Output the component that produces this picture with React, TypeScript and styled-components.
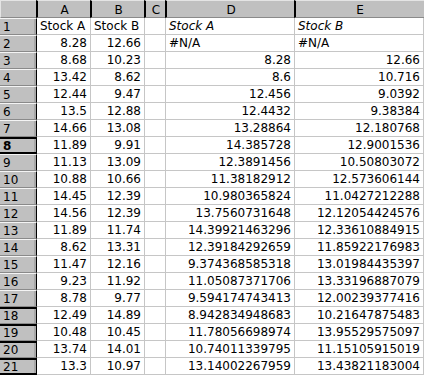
import React from "react";
import styled, { createGlobalStyle, css } from "styled-components";

const Global = createGlobalStyle`
  html, body { margin: 0; padding: 0; background: #ffffff; overflow: hidden; }
  body { font-family: "DejaVu Sans", "Liberation Sans", sans-serif; font-size: 12px; color: #000; }
`;

const Sheet = styled.div`
  display: grid;
  grid-template-columns: 37px 54px 54px 21px 129px 129px;
  grid-template-rows: 18px repeat(21, 17px);
  width: 425px;
  height: 377px;
  overflow: hidden;
  background: #ffffff;
`;

const Corner = styled.div`
  box-sizing: border-box;
  background: #c0c0c0;
  border-top: 1px solid #e4e4e4;
  border-left: 1px solid #e4e4e4;
  border-bottom: 1px solid #8a8a8a;
  border-right: 1px solid #000;
`;

const ColHead = styled.div`
  box-sizing: border-box;
  background: #c0c0c0;
  border-left: 2px solid #000;
  border-top: 1px solid #e4e4e4;
  border-bottom: 1px solid #8a8a8a;
  margin-left: -1px;
  display: flex;
  align-items: center;
  justify-content: center;
  font-size: 12px;
  line-height: 14px;
  padding-top: 1px;
`;

const RowHead = styled.div<{ $top?: boolean; $bottom?: boolean; $bold?: boolean }>`
  box-sizing: border-box;
  background: #c0c0c0;
  border-top: 1px solid #f4f4f4;
  border-bottom: 1px solid #8a8a8a;
  border-right: 1px solid #000;
  box-shadow: inset -2px 0 0 #a8a8a8;
  display: flex;
  align-items: center;
  padding-left: 3px;
  font-size: 12px;
  line-height: 14px;
  ${(p) =>
    p.$top &&
    css`
      border-top: 2px solid #000;
    `}
  ${(p) =>
    p.$bottom &&
    css`
      border-bottom: 2px solid #000;
    `}
  ${(p) =>
    p.$bold &&
    css`
      font-weight: bold;
    `}
`;

const Cell = styled.div<{ $align?: "left" | "right"; $italic?: boolean }>`
  box-sizing: border-box;
  background: #ffffff;
  border-right: 1px solid #c6c6c6;
  border-bottom: 1px solid #c6c6c6;
  display: flex;
  align-items: center;
  justify-content: ${(p) => (p.$align === "right" ? "flex-end" : "flex-start")};
  padding: 0 3px 0 3px;
  font-size: 12px;
  line-height: 14px;
  white-space: nowrap;
  overflow: hidden;
  font-style: ${(p) => (p.$italic ? "italic" : "normal")};
`;

type Row = [string, string, string, string];

const rows: Row[] = [
  ["Stock A", "Stock B", "Stock A", "Stock B"],
  ["8.28", "12.66", "#N/A", "#N/A"],
  ["8.68", "10.23", "8.28", "12.66"],
  ["13.42", "8.62", "8.6", "10.716"],
  ["12.44", "9.47", "12.456", "9.0392"],
  ["13.5", "12.88", "12.4432", "9.38384"],
  ["14.66", "13.08", "13.28864", "12.180768"],
  ["11.89", "9.91", "14.385728", "12.9001536"],
  ["11.13", "13.09", "12.3891456", "10.50803072"],
  ["10.88", "10.66", "11.38182912", "12.573606144"],
  ["14.45", "12.39", "10.980365824", "11.0427212288"],
  ["14.56", "12.39", "13.7560731648", "12.12054424576"],
  ["11.89", "11.74", "14.39921463296", "12.33610884915"],
  ["8.62", "13.31", "12.39184292659", "11.85922176983"],
  ["11.47", "12.16", "9.374368585318", "13.01984435397"],
  ["9.23", "11.92", "11.05087371706", "13.33196887079"],
  ["8.78", "9.77", "9.594174743413", "12.00239377416"],
  ["12.49", "14.89", "8.942834948683", "10.21647875483"],
  ["10.48", "10.45", "11.78056698974", "13.95529575097"],
  ["13.74", "14.01", "10.74011339795", "11.15105915019"],
  ["13.3", "10.97", "13.14002267959", "13.43821183004"],
];

const isNum = (s: string) => /^[0-9.]+$/.test(s);

const darkTop = new Set([8, 18, 19, 20, 21]);
const darkBottom = new Set([8, 21]);

export default function App() {
  return (
    <>
      <Global />
      <Sheet>
        <Corner />
        {["A", "B", "C", "D", "E"].map((c) => (
          <ColHead key={c}>{c}</ColHead>
        ))}
        {rows.map((r, i) => {
          const n = i + 1;
          return (
            <React.Fragment key={n}>
              <RowHead $top={darkTop.has(n)} $bottom={darkBottom.has(n)} $bold={n === 8}>
                {n}
              </RowHead>
              <Cell $align={isNum(r[0]) ? "right" : "left"}>{r[0]}</Cell>
              <Cell $align={isNum(r[1]) ? "right" : "left"}>{r[1]}</Cell>
              <Cell />
              <Cell $align={isNum(r[2]) ? "right" : "left"} $italic={n === 1}>
                {r[2]}
              </Cell>
              <Cell $align={isNum(r[3]) ? "right" : "left"} $italic={n === 1}>
                {r[3]}
              </Cell>
            </React.Fragment>
          );
        })}
      </Sheet>
    </>
  );
}
